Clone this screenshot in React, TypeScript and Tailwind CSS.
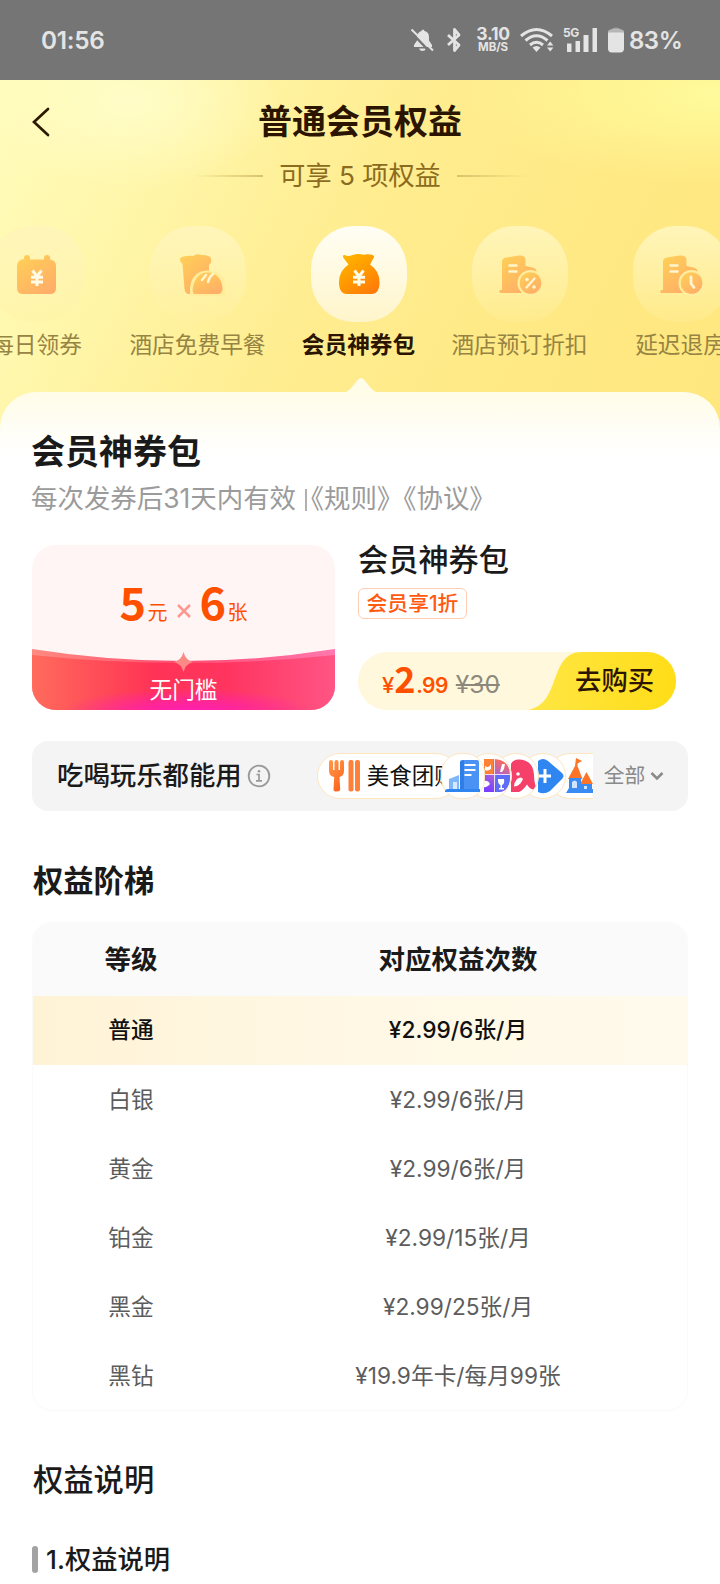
import type { ReactNode } from "react";

interface BenefitProp {
  label: string;
  icon: ReactNode;
  active?: boolean;
}

interface LevelRow {
  level: string;
  times: string;
}

const levels: LevelRow[] = [
  { level: "普通", times: "¥2.99/6张/月" },
  { level: "白银", times: "¥2.99/6张/月" },
  { level: "黄金", times: "¥2.99/6张/月" },
  { level: "铂金", times: "¥2.99/15张/月" },
  { level: "黑金", times: "¥2.99/25张/月" },
  { level: "黑钻", times: "¥19.9年卡/每月99张" },
];

const OrangeDefs = () => (
  <svg className="absolute h-0 w-0">
    <defs>
      <linearGradient id="orange" x1="0.1" y1="0" x2="0.8" y2="1">
        <stop offset="0" stopColor="#ffb800" />
        <stop offset="0.5" stopColor="#ff9a00" />
        <stop offset="1" stopColor="#ff7a0a" />
      </linearGradient>
      <linearGradient id="pale" x1="0.1" y1="0" x2="0.8" y2="1">
        <stop offset="0" stopColor="#ffd057" />
        <stop offset="1" stopColor="#ffac68" />
      </linearGradient>
    </defs>
  </svg>
);

const Yen = () => (
  <path d="M43.500 44.500l4.500 6 4.500-6M42 51.200h12M42 56h12M48 50.500v9.500" fill="none" stroke="#fffbe6" strokeWidth="3" />
);

const CalendarIcon = () => (
  <svg viewBox="0 0 96 96" className="h-24 w-24">
    <path
      d="M35 33v-1a3 3 0 0 1 6 0v1.500h14V32a3 3 0 0 1 6 0v1.600q6 .8 6 6.500v22q0 6-6 6H34q-6 0-6-6V40q0-6 7-7z"
      fill="url(#pale)"
    />
    <Yen />
  </svg>
);

const BreakfastIcon = () => (
  <svg viewBox="0 0 96 96" className="h-24 w-24">
    <path d="M32 31q6-2 11-1 4-3 8-1 10 0 10 4 1 4-2 6v29H39q-4 0-4.500-5L32.500 38q-5-5-.5-7z" fill="url(#pale)" />
    <path d="M40 70V62q2-17 17-17.500 18 1 18 16.500v9z" fill="#ffed9b" />
    <path d="M44 68q-2-2-1-7Q46 47 57 46.500 71 47 72.500 62q0 6-5 6z" fill="url(#pale)" />
    <path d="M52 54l4-5M58 56q1-5 5-8" fill="none" stroke="#fff6cf" strokeWidth="2.400" strokeLinecap="round" />
  </svg>
);

const BagIcon = () => (
  <svg viewBox="0 0 96 96" className="h-24 w-24">
    <path
      d="M33.500 29q4 1.800 8 0 6-1.800 11-.3 5-1.200 9 .3 3 1 .5 4l-3 5.500q9.500 6.500 9.500 17.500 0 12-8 12H36q-8 0-8-12 0-11 9.500-17.500l-5-6.500q-1.500-3 1-3z"
      fill="url(#orange)"
    />
    <Yen />
  </svg>
);

const HotelIcon = ({ children }: { children: ReactNode }) => (
  <svg viewBox="0 0 96 96" className="h-24 w-24">
    <path
      d="M30 64V36q0-4 4-4.500l13-2q6-.3 6.500 4V40l7 1.500q4 1 4 4V67H29q-3-.5-1-3z"
      fill="url(#pale)"
    />
    <path d="M37.500 39.500h7M37.500 45.500h7" stroke="#fff6cf" strokeWidth="2.400" strokeLinecap="round" />
    <circle cx="58.500" cy="57" r="13" fill="#ffee9f" />
    <circle cx="58.500" cy="57" r="10.800" fill="url(#pale)" />
    {children}
  </svg>
);

const Benefit = ({ label, icon, active }: BenefitProp) => (
  <div className="flex w-[161px] shrink-0 flex-col items-center">
    <div
      className={
        active
          ? "h-24 w-24 rounded-[43px] bg-linear-to-b from-[#fffef4] to-[#fff5cb]"
          : "h-24 w-24 rounded-[43px] bg-linear-to-b from-[#fff5b9] to-[#fff0a0]/30"
      }
    >
      {icon}
    </div>
    <p
      className={
        active
          ? "mt-2 text-[22.700px] leading-[30px] font-bold whitespace-nowrap text-[#2b1400]"
          : "mt-2 text-[22.700px] leading-[30px] whitespace-nowrap text-[#968443]"
      }
    >
      {label}
    </p>
  </div>
);

const StatusBar = () => (
  <header className="flex h-20 items-center bg-[#757575] pl-[41px] text-[#e4e4e4]">
    <span className="mt-px w-[369px] text-[24.300px] font-semibold tracking-[-0.3px]">01:56</span>
    <svg viewBox="0 0 24 24" className="h-6 w-6 shrink-0">
      <path d="M4 17l3-4.500V9q.5-5 4.500-6 .5-1.500 1.500-1.500T14.500 3q4.500 1 4.500 6v3.500l3 4.500v2H4z M9 20.500h7q-1 2.500-3.500 2.500T9 20.500z" fill="#e4e4e4" />
      <path d="M0 3L20 24" stroke="#757575" strokeWidth="2.500" />
      <path d="M1.500 1.500L23 22.500" stroke="#e4e4e4" strokeWidth="2" />
    </svg>
    <svg viewBox="0 0 18 26" className="ml-[11px] h-[26px] w-[18px] shrink-0">
      <path d="M3 8l11 10-4.500 5.500v-21L14 8 3 18" fill="none" stroke="#e4e4e4" strokeWidth="2.800" strokeLinejoin="round" />
    </svg>
    <div className="-mt-[2px] ml-[12px] flex w-[36px] flex-col items-center font-bold">
      <span className="text-[17.500px] leading-[17px] tracking-[-0.3px]">3.10</span>
      <span className="text-[11.500px] leading-[11px] tracking-[-0.1px]">MB/S</span>
    </div>
    <svg viewBox="0 0 34 26" className="ml-[9px] h-[26px] w-[34px] shrink-0">
      <g fill="none" stroke="#e4e4e4" strokeWidth="3">
        <path d="M1 9Q16.500-4 32 9" />
        <path d="M5.500 13.500Q16.500 4 27.500 13.500" />
        <path d="M10 18q6.500-5.500 13 0" />
      </g>
      <path d="M12.500 20.500q4-3 8 0l-4 4.500z M27 18.500l3.200-4 3.200 4z M27 20.500l3.200 4 3.200-4z" fill="#e4e4e4" />
    </svg>
    <div className="relative ml-[9px] h-[26px] w-[36px] shrink-0">
      <span className="absolute top-0 left-0 text-[12px] leading-3 font-bold tracking-[-0.5px]">5G</span>
      <svg viewBox="0 0 36 26" className="h-full w-full">
        <path d="M4 16.500h4.500V25H4z M12.500 14H17v11h-4.500z M20.500 8h5v17h-5z M29.500 1H34v24h-4.500z" fill="#e4e4e4" />
      </svg>
    </div>
    <svg viewBox="0 0 18 26" className="ml-[8px] h-[26px] w-[18px] shrink-0">
      <path d="M5 3q0-2.500 4-2.500T13 3z" fill="#a2a2a2" />
      <rect x="1" y="2.500" width="16" height="23" rx="4" fill="#e4e4e4" />
      <path d="M1 5.500q0-3 4-3h8q4 0 4 3z" fill="#b5b5b5" />
    </svg>
    <span className="mt-px ml-[4px] text-[24px] font-semibold tracking-[-0.5px]">83%</span>
  </header>
);

const Coupon = () => (
  <section className="relative flex h-[165px] w-[303px] shrink-0 flex-col items-center overflow-hidden rounded-3xl bg-[#fff5f5]">
    <svg viewBox="0 0 303 165" className="absolute inset-0 h-full w-full">
      <defs>
        <linearGradient id="wave" x1="0" x2="1">
          <stop offset="0" stopColor="#ff6b5c" />
          <stop offset="0.4" stopColor="#ff3355" />
          <stop offset="0.65" stopColor="#ff3560" />
          <stop offset="1" stopColor="#ff5585" />
        </linearGradient>
        <linearGradient id="rim" x1="0" x2="1">
          <stop offset="0" stopColor="#ff8b80" />
          <stop offset="0.5" stopColor="#ff4a70" />
          <stop offset="1" stopColor="#ff78ae" />
        </linearGradient>
        <radialGradient id="glow">
          <stop offset="0" stopColor="#ff1fb4" />
          <stop offset="0.4" stopColor="#ff1fb4" stopOpacity="0.7" />
          <stop offset="1" stopColor="#ff1fb4" stopOpacity="0" />
        </radialGradient>
      </defs>
      <path d="M0 104Q151 128 303 104V165H0z" fill="url(#rim)" />
      <path d="M0 110Q151 126 303 110V165H0z" fill="url(#wave)" />
      <ellipse cx="155" cy="167" rx="125" ry="24" fill="url(#glow)" />
      <path d="M151.500 107q2 8 9.500 10-7.500 2-9.500 10-2-8-9.500-10 7.500-2 9.500-10z" fill="#fa8a86" />
    </svg>
    <p className="relative mt-[30px] flex h-[52px] items-baseline text-[#ff5000]">
      <span className="w-[28px] font-['Noto_Sans_CJK_SC'] text-[45px] leading-[52px] font-bold">5</span>
      <span className="text-[20px]">元</span>
      <svg viewBox="0 0 14 14" className="mx-[9px] h-3.5 w-3.5 -translate-y-[2px]">
        <path d="M1 1l12 12M13 1L1 13" stroke="#fb9891" strokeWidth="2.500" />
      </svg>
      <span className="w-[28px] font-['Noto_Sans_CJK_SC'] text-[45px] leading-[52px] font-bold">6</span>
      <span className="text-[20px]">张</span>
    </p>
    <p className="relative mt-[47px] text-[22.700px] leading-[32px] text-white">无门槛</p>
  </section>
);

const BuyButton = () => (
  <div className="relative mt-[33px] flex h-[58px] w-[318px] items-center overflow-hidden rounded-full bg-[#fff8dc]">
    <svg viewBox="0 0 318 58" className="absolute inset-0 h-full w-full">
      <defs>
        <linearGradient id="buy" x1="0" x2="1">
          <stop offset="0" stopColor="#ffe645" />
          <stop offset="1" stopColor="#ffdd17" />
        </linearGradient>
      </defs>
      <path d="M170 58C204 52 190 0 224 0H318V58z" fill="url(#buy)" />
    </svg>
    <p className="relative flex items-baseline pl-6 leading-[40px] text-[#ff5000]">
      <span className="text-[22px] font-medium">¥</span>
      <span className="w-[22px] font-['Noto_Sans_CJK_SC'] text-[36px] leading-[40px] font-bold">2</span>
      <span className="text-[21px] font-semibold tracking-[-0.6px]">.99</span>
      <del className="ml-[8px] text-[24.500px] text-[#8c897c] decoration-[1.500px]">¥30</del>
    </p>
    <span className="absolute right-[22px] text-[26.300px] leading-[40px] font-medium text-[#2b1400]">去购买</span>
  </div>
);

const categories = [
  <svg viewBox="0 0 27 46" className="h-full w-full">
    <defs>
      <linearGradient id="fun" x1="0.6" y1="0" x2="0.3" y2="1">
        <stop offset="0" stopColor="#ff6a55" />
        <stop offset="0.5" stopColor="#a664d8" />
        <stop offset="1" stopColor="#7b3dff" />
      </linearGradient>
    </defs>
    <path d="M0 6h8q18 0 18 16t-10 17H0z" fill="url(#fun)" />
    <path d="M0 6h9v15H0z" fill="#ff8135" />
    <path d="M12 22h14q1 15-12 17h-2z" fill="#5d6df5" />
    <path d="M10.500 6v33M0 21.500h26" stroke="#f1dcf5" strokeWidth="1" />
    <path d="M14 26h6q1 5-2 6v3h2v1.500h-5V35h1.500v-3q-3-1-2.500-6z M16 19l2-8 3 0-1 5-2 3z M0 28q4-1 6 3-3 4-6 3z M1 13q4 3 6-2v5q-4 3-6 1z" fill="#fff" />
  </svg>,
  <svg viewBox="0 0 27 46" className="h-full w-full">
    <path d="M0 11Q2 6 9 6.500q13 1 14 15 0 11 4 15-7 2-11-5-4 6-8 7.500H0z" fill="#f5416a" />
    <path d="M6 26q4-3 6 0-2 5-6 7l-3 .5q0-4 3-7.500z" fill="#fff" />
    <circle cx="7" cy="21" r="1.800" fill="#fff" />
  </svg>,
  <svg viewBox="0 0 27 46" className="h-full w-full">
    <path d="M0 8q5-4 10 0l14 12q3 3 0 6L12 38q-6 4-12 1z" fill="#2f86f0" />
    <path d="M0 23h13M7 16v14" stroke="#fff" strokeWidth="3" />
  </svg>,
  <svg viewBox="0 0 27 46" className="h-full w-full">
    <path d="M10 5l6 3-4.500 2.500V13l5 13H2l7-13z M20.500 19L27 31H14z" fill="#ff7426" />
    <path d="M3 25h12v6h11v5h1v4H0l3-5z" fill="#3a8cf2" />
    <path d="M6 29q3-3 5 0v6H6z M18 33h3v3h-3z" fill="#cfe4ff" />
  </svg>,
];

const pillShapes = [
  "z-[4] rounded-full",
  "z-[3] rounded-full",
  "z-[2] rounded-full",
  "z-[1] rounded-l-full rounded-r-md border-r-0",
];

const CategoryPills = () => (
  <div className="relative flex h-[46px] w-[275px] shrink-0 items-center">
    <div className="flex h-[46px] w-[142px] shrink-0 items-center rounded-full border border-[#fde6c0] bg-white pl-[10px]">
      <svg viewBox="0 0 34 34" className="h-[34px] w-[34px] shrink-0">
        <defs>
          <linearGradient id="fork" x1="0" y1="0" x2="0.5" y2="1">
            <stop offset="0" stopColor="#ff9a4a" />
            <stop offset="1" stopColor="#ff661f" />
          </linearGradient>
        </defs>
        <path d="M1 3q0-2 2-2t2 2v8h1.500V3q0-2 2-2t2 2v8H12V3q0-2 2-2t2 2v9q0 5-4.500 6l.7 12q0 2.500-3.500 2.500T5.500 30l.7-12Q1 17 1 12z" fill="url(#fork)" />
        <rect x="20.500" y="1" width="5" height="31.500" rx="2" fill="#ff8038" />
        <rect x="27" y="1" width="5" height="31.500" rx="2" fill="#ff8038" />
      </svg>
      <span className="ml-[5px] w-[92px] shrink-0 text-[22.500px] leading-[32px] whitespace-nowrap text-[#111]">美食团购</span>
    </div>
    <div className="relative z-[5] -ml-[18px] flex h-[46px] w-[44px] shrink-0 items-center justify-center rounded-[20px] border border-[#fde6c0] bg-white">
      <svg viewBox="0 0 36 36" className="h-9 w-9 shrink-0">
        <path d="M15 4q0-2 2-2l15 0q2 0 2 2v27H15z" fill="#4a93f5" />
        <path d="M15 4L19 2v29h-4z" fill="#2f7de6" />
        <path d="M19.500 7h11M19.500 12h11M19.500 17h7" stroke="#fff" strokeWidth="2" />
        <path d="M4 21l10-4v14H4z" fill="#7fb6fb" />
        <path d="M8 24h4v7H8z" fill="#d6e8ff" />
        <path d="M0 33q0-2 3-2h32v3H0z" fill="#2f86f0" />
      </svg>
    </div>
    {categories.map((icon, i) => (
      <div
        key={i}
        className={`relative -ml-[19px] flex h-[46px] w-[46px] shrink-0 justify-end overflow-hidden border border-[#fde6c0] bg-white ${pillShapes[i]}`}
      >
        <span className="-mt-px h-[46px] w-[27px] shrink-0">{icon}</span>
      </div>
    ))}
  </div>
);

const App = () => {
  return (
    <div className="h-[1584px] w-[720px] overflow-hidden bg-white font-[Inter,'Noto_Sans_CJK_SC',sans-serif] text-[#1a1a1a]">
      <OrangeDefs />
      <StatusBar />

      <section className="h-[352px] overflow-hidden bg-[radial-gradient(ellipse_260px_90px_at_100%_4%,#fffb9c_0%,#fffb9c00_100%),radial-gradient(ellipse_150px_90px_at_18%_6%,#fffdc8_0%,#fffdc800_100%),linear-gradient(118deg,#fffcbc_0%,#fff6a9_22%,#ffed91_46%,#ffe984_75%,#ffe77e_100%)]">
        <div className="flex h-[84px] items-center pl-8">
          <svg viewBox="0 0 18 30" className="h-[30px] w-[18px]">
            <path d="M16 2L2 15l14 13" fill="none" stroke="#2b1a00" strokeWidth="2.700" strokeLinecap="round" />
          </svg>
          <h1 className="ml-[208px] text-[34px] leading-[44px] font-bold text-[#2b1400]">普通会员权益</h1>
        </div>
        <div className="flex h-6 items-center justify-center gap-4">
          <i className="h-[2px] w-[70px] bg-linear-to-r from-[#d8c36c]/0 to-[#d8c36c]" />
          <span className="text-[26.200px] leading-8 text-[#8b6b20]">可享 5 项权益</span>
          <i className="h-[2px] w-[70px] bg-linear-to-l from-[#d8c36c]/0 to-[#d8c36c]" />
        </div>
        <div className="mt-[38px] -ml-[44px] flex">
          <Benefit label="每日领券" icon={<CalendarIcon />} />
          <Benefit label="酒店免费早餐" icon={<BreakfastIcon />} />
          <Benefit label="会员神券包" icon={<BagIcon />} active />
          <Benefit
            label="酒店预订折扣"
            icon={
              <HotelIcon>
                <path d="M62.500 52.500l-8 9" stroke="#fff6cf" strokeWidth="2.200" strokeLinecap="round" />
                <circle cx="55" cy="53.500" r="1.800" fill="#fff6cf" />
                <circle cx="62" cy="61" r="1.800" fill="#fff6cf" />
              </HotelIcon>
            }
          />
          <Benefit
            label="延迟退房"
            icon={
              <HotelIcon>
                <path d="M58 51v6.500l3 4" fill="none" stroke="#fff6cf" strokeWidth="2.800" strokeLinecap="round" />
              </HotelIcon>
            }
          />
        </div>
      </section>

      <main className="relative -mt-10 rounded-t-[36px] bg-linear-to-b from-[#fffce8] to-white to-[64px] px-8">
        <svg viewBox="0 0 36 16" className="absolute -top-[15px] left-[343px] h-4 w-9">
          <path d="M0 16q5-1 9-6l6-7.500q3-3 6 0L27 10q4 5 9 6z" fill="#fffce8" />
        </svg>
        <h2 className="-ml-px pt-[37px] text-[34px] leading-[46px] font-bold">会员神券包</h2>
        <p className="-ml-px text-[26.450px] leading-[46px] whitespace-nowrap text-[#9b9b9b]">
          每次发券后31天内有效
          <i className="mr-[-9px] ml-[9px] inline-block h-[22px] w-[1.500px] bg-[#b0b0b0] align-[-3px]" />
          《规则》《协议》
        </p>

        <div className="mt-[24px] flex gap-[23px]">
          <Coupon />
          <div>
            <h3 className="text-[30.200px] leading-[30px] font-medium">会员神券包</h3>
            <div className="mt-[13px] flex h-[31px] w-[109px] items-center justify-center rounded-md border border-[#ffcdb5] pt-px text-[20.800px] font-medium text-[#ff5a10]">
              会员享1折
            </div>
            <BuyButton />
          </div>
        </div>

        <section className="mt-[31px] flex h-[70px] w-[656px] items-center rounded-2xl bg-[#f4f4f4] pl-[25px]">
          <span className="text-[26.400px] font-medium">吃喝玩乐都能用</span>
          <svg viewBox="0 0 24 24" className="ml-[5px] h-6 w-6 shrink-0">
            <circle cx="12" cy="12" r="10.300" fill="none" stroke="#999" strokeWidth="1.800" />
            <path d="M9.500 10.500H12V16.500M9 16.800h6" fill="none" stroke="#999" strokeWidth="1.700" />
            <circle cx="12" cy="7.300" r="1.300" fill="#999" />
          </svg>
          <div className="ml-[46px]">
            <CategoryPills />
          </div>
          <span className="ml-[12px] text-[20.800px] whitespace-nowrap text-[#8a8a8a]">全部</span>
          <svg viewBox="0 0 14 10" className="ml-[5px] h-[10px] w-[14px] shrink-0">
            <path d="M1.500 2L7 7.500 12.500 2" fill="none" stroke="#8a8a8a" strokeWidth="2.500" />
          </svg>
        </section>

        <h2 className="mt-[50px] pl-[1px] text-[30.300px] leading-[40px] font-bold">权益阶梯</h2>
        <section className="mt-[21px] h-[489px] w-[656px] overflow-hidden rounded-[20px] border border-[#fafafa] bg-white">
          <div className="flex h-[73px] items-center bg-[#fafafa] text-center text-[26.500px] font-bold">
            <span className="w-[196px]">等级</span>
            <span className="flex-1">对应权益次数</span>
          </div>
          {levels.map((row, i) => (
            <div
              key={row.level}
              className={
                i === 0
                  ? "flex h-[69px] items-center bg-linear-to-r from-[#fff3d6] via-[#fff8e5] to-[#fffaec] text-center text-[22.700px] font-medium text-[#111]"
                  : "flex h-[69px] items-center pt-px text-center text-[22.700px] text-[#5c5c5c]"
              }
            >
              <span className="w-[196px]">{row.level}</span>
              <span className="flex-1">{row.times}</span>
            </div>
          ))}
        </section>

        <h2 className="mt-[49px] pl-[1px] text-[30.300px] leading-[40px] font-medium">权益说明</h2>
        <div className="mt-[39px] flex items-center gap-2">
          <i className="h-[27px] w-[6px] rounded-full bg-[#a3a3a3]" />
          <span className="pt-px text-[26.300px] leading-[40px] font-medium">1.权益说明</span>
        </div>
      </main>
    </div>
  );
};

export default App;
